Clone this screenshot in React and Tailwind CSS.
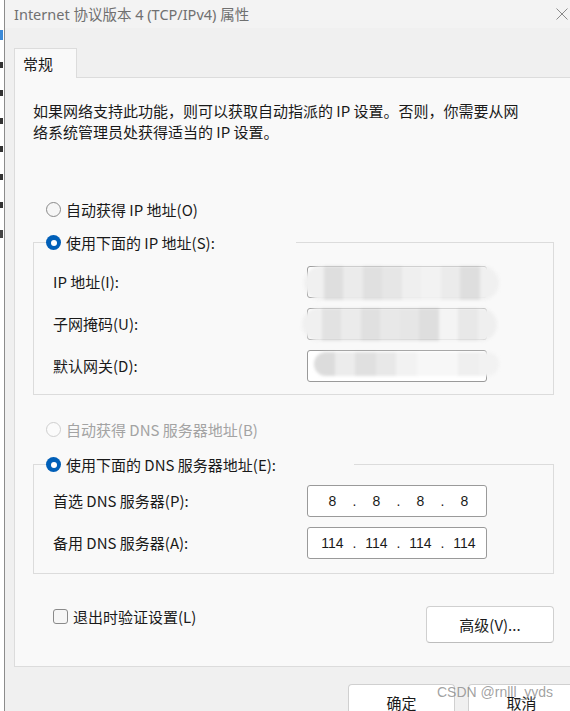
import React from 'react';

const cjk = "font-['Noto_Sans_CJK_SC',sans-serif]";

const Radio = ({ checked, disabled }) => {
    if (checked) {
        return (
            <span className="flex h-[15px] w-[15px] shrink-0 items-center justify-center rounded-full bg-[#005fb8]">
                <span className="h-[6px] w-[6px] rounded-full bg-white" />
            </span>
        );
    }
    return disabled ? (
        <span className="h-[15px] w-[15px] shrink-0 rounded-full border border-[#cfcfcf] bg-[#fbfbfb]" />
    ) : (
        <span className="h-[15px] w-[15px] shrink-0 rounded-full border border-[#8a8a8a] bg-[#f6f6f6]" />
    );
};

const Shades = ({ colors }) => (
    <div className="flex h-full w-full">
        {colors.map((c, i) => (
            <div key={i} className="h-full flex-1" style={{ background: c }} />
        ))}
    </div>
);

const Field = ({ children }) => (
    <div className="relative h-[32px] w-[180px] shrink-0 rounded-[3px] border border-[#9a9a9a] bg-white">{children}</div>
);

const Octets = ({ values }) => (
    <div className="flex h-full items-center pl-[6px] font-['Liberation_Sans',sans-serif] text-[14px] text-[#1a1a1a]">
        {values.map((v, i) => (
            <React.Fragment key={i}>
                {i > 0 && <span className="w-[7px] text-center">.</span>}
                <span className="w-[37px] text-center">{v}</span>
            </React.Fragment>
        ))}
    </div>
);

const Row = ({ label, children }) => (
    <div className="flex items-center">
        <div className="w-[273px] pl-[19px] pb-[2px]">{label}</div>
        {children}
    </div>
);

export default function App() {
    return (
        <div className={`relative flex h-[711px] w-[570px] overflow-hidden bg-white text-[15px] leading-[21px] text-[#1a1a1a] ${cjk}`}>
            {/* background window peeking out on the left */}
            <div className="flex w-[4px] shrink-0 flex-col gap-[22px] bg-white pt-[30px]">
                <div className="h-[10px] w-[3px] bg-[#3b8ad8]" />
                <div className="h-[6px] w-[3px] bg-[#333]" />
                <div className="h-[6px] w-[3px] bg-[#333]" />
                <div className="h-[6px] w-[3px] bg-[#333]" />
                <div className="h-[6px] w-[3px] bg-[#333]" />
                <div className="h-[6px] w-[3px] bg-[#333]" />
                <div className="h-[6px] w-[3px] bg-[#333]" />
                <div className="h-[8px] w-[3px] bg-[#444]" />
            </div>

            <div className="flex w-[566px] shrink-0 flex-col overflow-hidden border-l border-[#8c8c8c] bg-[#f0f0f0]">
                <div className="flex h-[28px] shrink-0 items-center bg-[#f3f3f3] pl-[9px]">
                    <span className="font-['Noto_Sans','Noto_Sans_CJK_SC',sans-serif] text-[14.5px] text-[#707070]">
                        Internet 协议版本 4 (TCP/IPv4) 属性
                    </span>
                    <svg className="ml-auto mr-[2px]" width="12" height="12" viewBox="0 0 12 12">
                        <path d="M0.5 0.5 L11.5 11.5 M11.5 0.5 L0.5 11.5" stroke="#8a8a8a" strokeWidth="1" fill="none" />
                    </svg>
                </div>

                <div className="mt-[20px] flex">
                    <div className="relative z-10 -mb-px ml-[9px] flex h-[30px] w-[63px] items-center border border-b-0 border-[#dcdcdc] bg-[#f9f9f9] pl-[8px]">
                        常规
                    </div>
                </div>

                <div className="ml-[9px] h-[590px] w-[570px] shrink-0 border border-[#dcdcdc] bg-[#f9f9f9] pl-[18px] pt-[22px]">
                    <p>
                        如果网络支持此功能，则可以获取自动指派的 IP 设置。否则，你需要从网
                        <br />
                        络系统管理员处获得适当的 IP 设置。
                    </p>

                    <div className="ml-[13px] mt-[57px] flex h-[21px] items-center gap-[5px]">
                        <Radio />
                        <span>自动获得 IP 地址(O)</span>
                    </div>

                    <fieldset className="mt-[12px] w-[521px] border border-[#dcdcdc] pb-[12px]">
                        <legend className="ml-[12px] flex h-[21px] w-[250px] items-center gap-[5px] bg-[#f9f9f9]">
                            <Radio checked />
                            <span>使用下面的 IP 地址(S):</span>
                        </legend>
                        <div className="flex flex-col gap-[10px] pt-[13px]">
                            <Row label="IP 地址(I):">
                                <Field>
                                    <div className="absolute -bottom-[3px] -left-[4px] -right-[13px] -top-[1px] overflow-hidden rounded-full blur-[1.5px]">
                                        <Shades colors={['#f0f0f0', '#dedede', '#ebebeb', '#e0e0e0', '#e6e6e6', '#efefef', '#f2f2f2', '#ebebeb', '#dedede', '#f0f0f0']} />
                                    </div>
                                </Field>
                            </Row>
                            <Row label="子网掩码(U):">
                                <Field>
                                    <div className="absolute -bottom-[2px] -left-[6px] -right-[11px] -top-[1px] overflow-hidden rounded-full blur-[1.5px]">
                                        <Shades colors={['#f0f0f0', '#e2e2e2', '#ebebeb', '#e0e0e0', '#e8e8e8', '#e6e6e6', '#dedede', '#f4f4f4', '#e8e8e8', '#efefef']} />
                                    </div>
                                </Field>
                            </Row>
                            <Row label="默认网关(D):">
                                <Field>
                                    <div className="absolute -right-[13px] bottom-[5px] left-[6px] top-[1px] overflow-hidden rounded-full blur-[1.5px]">
                                        <Shades colors={['#dcdcdc', '#ececec', '#e0e0e0', '#e8e8e8', '#f2f2f2', '#f7f7f7', '#f7f7f7', '#efefef', '#f2f2f2']} />
                                    </div>
                                </Field>
                            </Row>
                        </div>
                    </fieldset>

                    <div className="ml-[13px] mt-[24px] flex h-[21px] items-center gap-[5px] text-[#a3a3a3]">
                        <Radio disabled />
                        <span>自动获得 DNS 服务器地址(B)</span>
                    </div>

                    <fieldset className="mt-[14px] w-[521px] border border-[#dcdcdc] pb-[14px]">
                        <legend className="ml-[12px] flex h-[21px] w-[308px] items-center gap-[5px] bg-[#f9f9f9]">
                            <Radio checked />
                            <span>使用下面的 DNS 服务器地址(E):</span>
                        </legend>
                        <div className="flex flex-col gap-[10px] pt-[10px]">
                            <Row label="首选 DNS 服务器(P):">
                                <Field>
                                    <Octets values={['8', '8', '8', '8']} />
                                </Field>
                            </Row>
                            <Row label="备用 DNS 服务器(A):">
                                <Field>
                                    <Octets values={['114', '114', '114', '114']} />
                                </Field>
                            </Row>
                        </div>
                    </fieldset>

                    <div className="mt-[32px] flex w-[521px] items-start justify-between">
                        <div className="flex h-[21px] items-center gap-[5px] pl-[20px]">
                            <span className="h-[15px] w-[15px] rounded-[3px] border border-[#8a8a8a] bg-[#f6f6f6]" />
                            <span>退出时验证设置(L)</span>
                        </div>
                        <button className="flex h-[37px] w-[128px] items-center justify-center rounded-[4px] border border-[#d0d0d0] border-b-[#bdbdbd] bg-white">
                            高级(V)...
                        </button>
                    </div>
                </div>

                <div className="ml-[343px] mt-[17px] flex gap-[13px]">
                    <button className="flex h-[36px] w-[107px] shrink-0 items-center justify-center rounded-[4px] border border-[#d0d0d0] border-b-[#bdbdbd] bg-white">
                        确定
                    </button>
                    <button className="flex h-[36px] w-[107px] shrink-0 items-center justify-center rounded-[4px] border border-[#d0d0d0] border-b-[#bdbdbd] bg-white">
                        取消
                    </button>
                </div>
            </div>

            <span className="absolute left-[437px] top-[682px] font-['Liberation_Sans',sans-serif] text-[14px] text-[#8a8a8a]/80">
                CSDN @rnlll_yyds
            </span>
        </div>
    );
}
